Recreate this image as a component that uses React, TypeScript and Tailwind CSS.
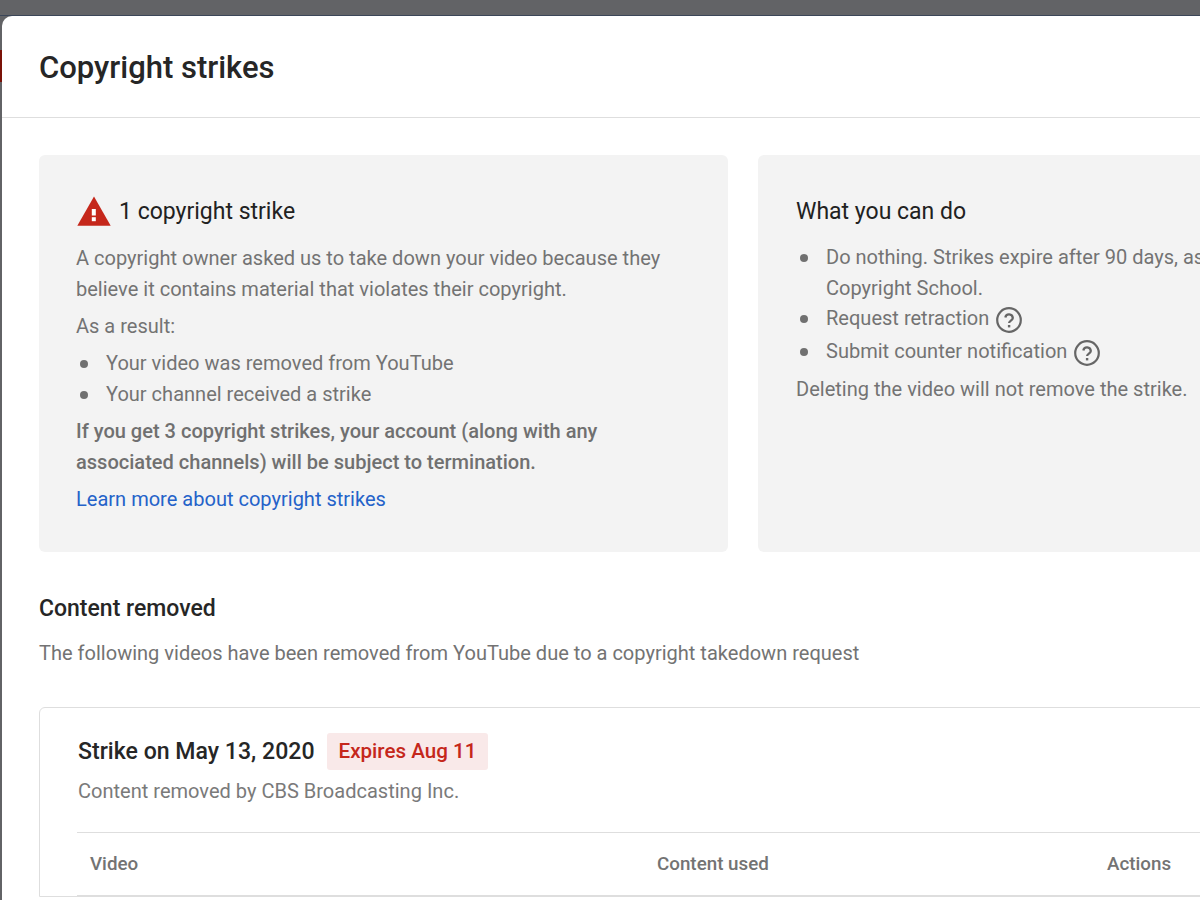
function HelpIcon() {
  return (
    <svg viewBox="0 0 26 26" className="ml-[7px] mt-[2px] h-[26px] w-[26px] shrink-0" fill="none">
      <circle cx="13" cy="13" r="11.8" stroke="#666666" strokeWidth="2.2" />
      <path d="M9.3 10.4a3.8 3.8 0 0 1 7.5.5c0 2.6-3.7 2.8-3.7 5.2" stroke="#666666" strokeWidth="2.3" />
      <rect x="11.9" y="18" width="2.4" height="2.4" fill="#666666" />
    </svg>
  );
}

function WarningIcon() {
  return (
    <svg viewBox="0 0 34 30" className="ml-[1px] mr-[8px] h-[30px] w-[34px] shrink-0" fill="none">
      <path d="M17 0.5 33.7 29.7H0.3Z" fill="#c5271b" />
      <rect x="14.8" y="13" width="4" height="6.5" fill="#ffffff" />
      <rect x="14.8" y="21.2" width="4" height="4" fill="#ffffff" />
    </svg>
  );
}

function Bullet({ children, className = "" }: { children: React.ReactNode; className?: string }) {
  return (
    <li className={`flex ${className}`}>
      <span className="mt-[12px] ml-[4px] mr-[18px] h-[8px] w-[8px] shrink-0 rounded-full bg-[#707070]" />
      <span>{children}</span>
    </li>
  );
}

export default function App() {
  return (
    <div className="h-[900px] w-[1200px] overflow-hidden bg-[#626366] font-['Roboto',sans-serif]">
      <div className="h-[16px] border-b border-[#3b4658]" />
      <div className="relative h-[884px] pl-[2px]">
        <div className="absolute left-0 top-[34px] h-[32px] w-[2px] bg-[#7a1208]" />
        <div className="h-full w-[1300px] rounded-tl-[10px] bg-white">
          <div className="flex h-[102px] items-center border-b border-[#dedede] pl-[37px] pt-[2px]">
            <h1 className="text-[31px] font-medium leading-none text-[#262626]">Copyright strikes</h1>
          </div>

          <div className="flex gap-[30px] pl-[37px] pt-[37px]">
            <section className="h-[397px] w-[689px] shrink-0 rounded-[6px] bg-[#f3f3f3] pl-[37px] pr-[30px] pt-[38px] text-[20.05px] leading-[31px] text-[#737373]">
              <h2 className="flex h-[36px] items-center text-[23px] text-[#212121]">
                <WarningIcon />
                1 copyright strike
              </h2>
              <p className="mt-[14px]">A copyright owner asked us to take down your video because they believe it contains material that violates their copyright.</p>
              <p className="mt-[6px]">As a result:</p>
              <ul className="mt-[6px]">
                <Bullet>Your video was removed from YouTube</Bullet>
                <Bullet>Your channel received a strike</Bullet>
              </ul>
              <p className="mt-[6px] font-medium text-[#707070]">If you get 3 copyright strikes, your account (along with any associated channels) will be subject to termination.</p>
              <a className="mt-[6px] block text-[#2462c9]">Learn more about copyright strikes</a>
            </section>

            <section className="h-[397px] w-[689px] shrink-0 rounded-[6px] bg-[#f3f3f3] pl-[38px] pr-[40px] pt-[38px] text-[20.05px] leading-[31px] text-[#737373]">
              <h2 className="flex h-[36px] items-center text-[23px] text-[#212121]">What you can do</h2>
              <ul className="mt-[13px]">
                <Bullet>Do nothing. Strikes expire after 90 days, as long as you complete Copyright School.</Bullet>
                <Bullet className="-mt-px">
                  <span className="flex items-center">Request retraction <HelpIcon /></span>
                </Bullet>
                <Bullet className="mt-[2px]">
                  <span className="flex items-center">Submit counter notification <HelpIcon /></span>
                </Bullet>
              </ul>
              <p className="mt-[7px]">Deleting the video will not remove the strike.</p>
            </section>
          </div>

          <div className="pl-[37px] pt-[41px]">
            <h3 className="text-[23px] font-medium leading-[32px] text-[#262626]">Content removed</h3>
            <p className="mt-[13px] text-[20.05px] leading-[31px] text-[#737373]">The following videos have been removed from YouTube due to a copyright takedown request</p>
          </div>

          <div className="ml-[37px] mt-[38px] w-[1300px] rounded-tl-[6px] border border-[#dedede] pl-[37px] pt-[25px]">
            <div className="flex items-center pl-px">
              <span className="pt-[1px] text-[23.1px] font-medium text-[#262626]">Strike on May 13, 2020</span>
              <span className="ml-[12px] flex h-[37px] items-center rounded-[3px] bg-[#f9e9e9] px-[12px] text-[20.6px] font-medium text-[#c5271b]">Expires Aug 11</span>
            </div>
            <p className="mt-[6px] pl-px text-[20.05px] leading-[31px] text-[#7a7a7a]">Content removed by CBS Broadcasting Inc.</p>
            <div className="mt-[25px] flex h-[64px] items-center border-y border-[#dedede] pl-[13px] text-[18.8px] font-medium text-[#737373]">
              <span className="w-[567px]">Video</span>
              <span className="w-[450px]">Content used</span>
              <span>Actions</span>
            </div>
          </div>
        </div>
      </div>
    </div>
  );
}
